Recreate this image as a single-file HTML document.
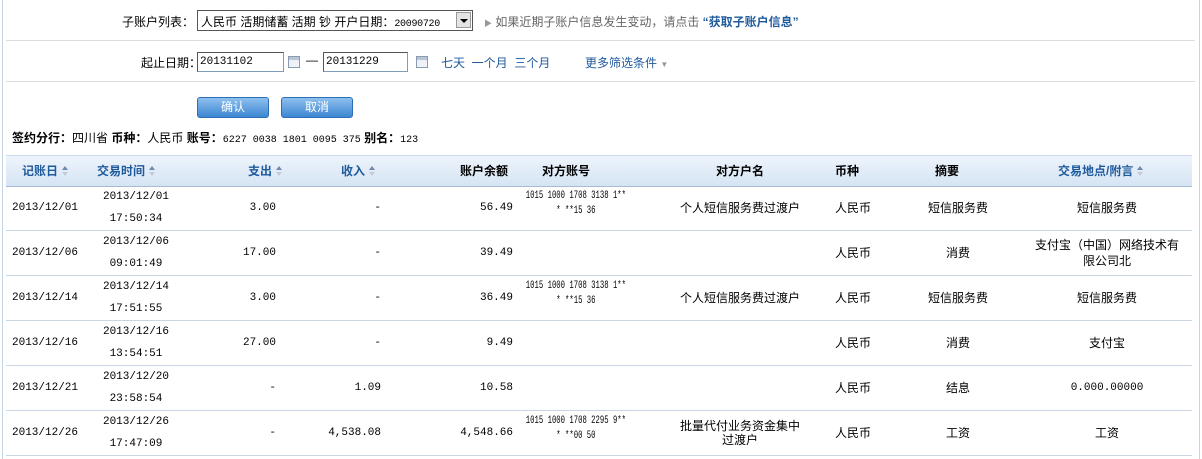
<!DOCTYPE html>
<html><head><meta charset="utf-8"><style>
body{margin:0;width:1202px;height:459px;background:#fff;position:relative;overflow:hidden;font-family:"Liberation Sans","Noto Sans CJK SC",sans-serif;font-size:12px;color:#000}
.a{position:absolute;white-space:nowrap}
.hl{position:absolute;left:6px;width:1189px;height:1px;background:#dcdcdc}
.inp{position:absolute;border:1px solid #7f9db9;border-top-color:#555;border-left-color:#555;background:#fff;height:18px;line-height:18px;padding-left:2px;font-family:"Liberation Mono",monospace;font-size:11px}
.cal{position:absolute;width:10px;height:10px;border:1px solid #8a9ab0;background:linear-gradient(#b8c6d8 0 3px,#eef2f7 3px);}
.lnk{color:#1f5a9c}
.btn{position:absolute;top:97px;height:19px;width:70px;border:1px solid #2d6fb5;border-radius:3px;background:linear-gradient(#8ec0ee,#3d86d2);color:#fff;text-align:center;line-height:19px}
.th{position:absolute;top:155px;left:6px;width:1186px;height:30px;background:linear-gradient(#eef4fb,#d5e4f4);border-top:1px solid #c9d8ea;border-bottom:1px solid #a8bcd5}
.h{position:absolute;top:162px;font-weight:bold;white-space:nowrap}
.b{color:#1f5a9c}
.ar{display:inline-block;width:7px;height:10px;vertical-align:-1px;margin-left:4px;position:relative}
.ar:before{content:"";position:absolute;left:0;top:0;border:3.5px solid transparent;border-bottom:4px solid #6e8aa8;border-top:0}
.ar:after{content:"";position:absolute;left:0;top:6px;border:3.5px solid transparent;border-top:4px solid #c3ccd6;border-bottom:0}
.row{position:absolute;left:6px;width:1186px;height:44px;border-bottom:1px solid #c8d5e3}
.c{position:absolute;top:0;height:44px;display:flex;align-items:center;line-height:22px}
.m{font-family:"Liberation Mono",monospace;font-size:11px}
.n{justify-content:center;text-align:center;align-items:flex-start;padding-top:3px}
.n span{display:inline-block;font-family:"Liberation Mono",monospace;font-size:11px;line-height:15px;transform:scaleX(0.66);white-space:nowrap}
.ctr{justify-content:center;text-align:center}
.r{justify-content:flex-end}
</style></head><body>
<div class="a" style="left:2px;top:0;width:1px;height:459px;background:#c5d5e6"></div>
<div class="a" style="left:1199px;top:0;width:1px;height:459px;background:#c5d5e6"></div>

<div class="a" style="left:122px;top:13px">子账户列表：</div>
<div class="a" style="left:197px;top:10px;width:274px;height:19px;border:1px solid #555;background:#fff">
 <span style="position:absolute;left:3px;top:2px">人民币 活期储蓄 活期 钞 开户日期：<span class="m" style="font-size:10px;letter-spacing:-0.3px">20090720</span></span>
 <span style="position:absolute;right:1px;top:1px;width:15px;height:16px;background:#e4e4e4;border:1px solid #999;box-sizing:border-box"><span style="position:absolute;left:3px;top:6px;border:4px solid transparent;border-top:4px solid #000;border-bottom:0"></span></span>
</div>
<div class="a" style="left:484px;top:13px;color:#666"><span style="font-size:8px;color:#999">▶</span> 如果近期子账户信息发生变动，请点击 <span class="lnk" style="font-weight:bold">“获取子账户信息”</span></div>
<div class="hl" style="top:40px"></div>

<div class="a" style="left:141px;top:54px">起止日期：</div>
<div class="inp" style="left:197px;top:52px;width:83px">20131102</div>
<div class="cal" style="left:288px;top:56px"></div>
<div class="a" style="left:306px;top:53px">—</div>
<div class="inp" style="left:323px;top:52px;width:81px">20131229</div>
<div class="cal" style="left:416px;top:56px"></div>
<div class="a lnk" style="left:441px;top:54px">七天 &nbsp;一个月 &nbsp;三个月</div>
<div class="a lnk" style="left:585px;top:54px">更多筛选条件 <span style="color:#999;font-size:8px">▼</span></div>
<div class="hl" style="top:81px"></div>

<div class="btn" style="left:197px">确认</div>
<div class="btn" style="left:281px">取消</div>

<div class="a" style="left:12px;top:129px"><b>签约分行：</b>四川省 <b>币种：</b>人民币 <b>账号：</b><span class="m" style="font-size:10px">6227 0038 1801 0095 375</span> <b>别名：</b><span class="m" style="font-size:10px">123</span></div>

<div class="th"></div>
<div class="h b" style="left:22px">记账日<i class="ar"></i></div>
<div class="h b" style="left:97px">交易时间<i class="ar"></i></div>
<div class="h b" style="left:248px">支出<i class="ar"></i></div>
<div class="h b" style="left:341px">收入<i class="ar"></i></div>
<div class="h" style="left:460px">账户余额</div>
<div class="h" style="left:542px">对方账号</div>
<div class="h" style="left:716px">对方户名</div>
<div class="h" style="left:835px">币种</div>
<div class="h" style="left:935px">摘要</div>
<div class="h b" style="left:1058px">交易地点/附言<i class="ar"></i></div>

<div class="row" style="top:186px">
 <div class="c m" style="left:6px">2013/12/01</div>
 <div class="c m ctr" style="left:84px;width:92px">2013/12/01<br>17:50:34</div>
 <div class="c m r" style="left:180px;width:90px">3.00</div>
 <div class="c m r" style="left:280px;width:95px">-</div>
 <div class="c m r" style="left:400px;width:107px">56.49</div>
 <div class="c n" style="left:512px;width:116px"><span>1015 1000 1708 3138 1**<br>* **15 36</span></div>
 <div class="c ctr" style="left:654px;width:160px">个人短信服务费过渡户</div>
 <div class="c ctr" style="left:807px;width:80px">人民币</div>
 <div class="c ctr" style="left:902px;width:100px">短信服务费</div>
 <div class="c ctr" style="left:1016px;width:170px">短信服务费</div>
</div>
<div class="row" style="top:231px">
 <div class="c m" style="left:6px">2013/12/06</div>
 <div class="c m ctr" style="left:84px;width:92px">2013/12/06<br>09:01:49</div>
 <div class="c m r" style="left:180px;width:90px">17.00</div>
 <div class="c m r" style="left:280px;width:95px">-</div>
 <div class="c m r" style="left:400px;width:107px">39.49</div>
 <div class="c ctr" style="left:807px;width:80px">人民币</div>
 <div class="c ctr" style="left:902px;width:100px">消费</div>
 <div class="c ctr" style="left:1016px;width:170px;line-height:16px">支付宝（中国）网络技术有<br>限公司北</div>
</div>
<div class="row" style="top:276px">
 <div class="c m" style="left:6px">2013/12/14</div>
 <div class="c m ctr" style="left:84px;width:92px">2013/12/14<br>17:51:55</div>
 <div class="c m r" style="left:180px;width:90px">3.00</div>
 <div class="c m r" style="left:280px;width:95px">-</div>
 <div class="c m r" style="left:400px;width:107px">36.49</div>
 <div class="c n" style="left:512px;width:116px"><span>1015 1000 1708 3138 1**<br>* **15 36</span></div>
 <div class="c ctr" style="left:654px;width:160px">个人短信服务费过渡户</div>
 <div class="c ctr" style="left:807px;width:80px">人民币</div>
 <div class="c ctr" style="left:902px;width:100px">短信服务费</div>
 <div class="c ctr" style="left:1016px;width:170px">短信服务费</div>
</div>
<div class="row" style="top:321px">
 <div class="c m" style="left:6px">2013/12/16</div>
 <div class="c m ctr" style="left:84px;width:92px">2013/12/16<br>13:54:51</div>
 <div class="c m r" style="left:180px;width:90px">27.00</div>
 <div class="c m r" style="left:280px;width:95px">-</div>
 <div class="c m r" style="left:400px;width:107px">9.49</div>
 <div class="c ctr" style="left:807px;width:80px">人民币</div>
 <div class="c ctr" style="left:902px;width:100px">消费</div>
 <div class="c ctr" style="left:1016px;width:170px">支付宝</div>
</div>
<div class="row" style="top:366px">
 <div class="c m" style="left:6px">2013/12/21</div>
 <div class="c m ctr" style="left:84px;width:92px">2013/12/20<br>23:58:54</div>
 <div class="c m r" style="left:180px;width:90px">-</div>
 <div class="c m r" style="left:280px;width:95px">1.09</div>
 <div class="c m r" style="left:400px;width:107px">10.58</div>
 <div class="c ctr" style="left:807px;width:80px">人民币</div>
 <div class="c ctr" style="left:902px;width:100px">结息</div>
 <div class="c m ctr" style="left:1016px;width:170px">0.000.00000</div>
</div>
<div class="row" style="top:411px">
 <div class="c m" style="left:6px">2013/12/26</div>
 <div class="c m ctr" style="left:84px;width:92px">2013/12/26<br>17:47:09</div>
 <div class="c m r" style="left:180px;width:90px">-</div>
 <div class="c m r" style="left:280px;width:95px">4,538.08</div>
 <div class="c m r" style="left:400px;width:107px">4,548.66</div>
 <div class="c n" style="left:512px;width:116px"><span>1015 1000 1708 2295 9**<br>* **00 50</span></div>
 <div class="c ctr" style="left:664px;width:140px;line-height:14px">批量代付业务资金集中<br>过渡户</div>
 <div class="c ctr" style="left:807px;width:80px">人民币</div>
 <div class="c ctr" style="left:902px;width:100px">工资</div>
 <div class="c ctr" style="left:1016px;width:170px">工资</div>
</div>
</body></html>
